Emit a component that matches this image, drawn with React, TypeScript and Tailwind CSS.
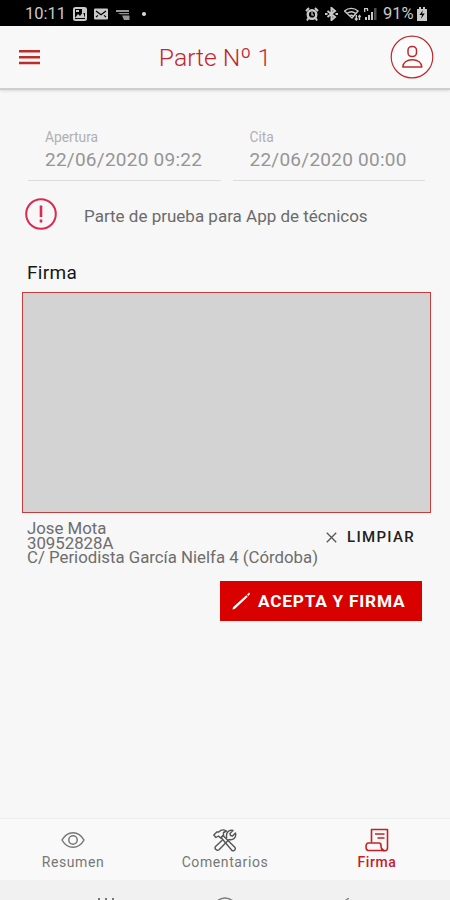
import { type ReactNode } from 'react'
import { clsx } from 'clsx'

interface DateFieldProps {
  label: string
  value: string
}

function DateField({ label, value }: DateFieldProps) {
  return (
    <div className="h-[58px] flex-1 border-b border-[#dcdcdc] pl-4 pt-[6px]">
      <p className="ml-[1px] text-[13.8px] leading-[17px] text-[#b0b0b0]">{label}</p>
      <p className="ml-[1px] mt-[3px] whitespace-nowrap text-[19px] leading-[22px] tracking-[0.25px] text-[#959595]">{value}</p>
    </div>
  )
}

function StatusBar() {
  return (
    <div className="flex h-[26px] shrink-0 items-center bg-black pl-[25px] pr-[22px] pt-[1px] text-[#c9c9c9]">
      <span className="w-[39px] whitespace-nowrap text-[16.5px] leading-5">10:11</span>

      {/* Notifications */}
      <svg className="ml-[9px] h-[14px] w-[14px]" viewBox="0 0 14 14">
        <rect x="1" y="1" width="12" height="12" rx="1.5" fill="none" stroke="currentColor" strokeWidth="2" />
        <path d="M2 11l3-4 2 2 3-4 2 6z" fill="currentColor" />
        <path d="M3 3h3v2H3zM9 2h3v4H9z" fill="currentColor" />
      </svg>
      <svg className="ml-[7px] h-[12px] w-[14px]" viewBox="0 0 14 12">
        <rect width="14" height="11" y=".5" rx="1" fill="currentColor" />
        <path d="M2 3l5 3.7L12 3M2 9l2-1.600M12 9l-2-1.600" fill="none" stroke="#000" strokeWidth="1.2" />
      </svg>
      <svg className="ml-[8px] mt-[2px] h-[12px] w-[14px]" viewBox="0 0 14 12" fill="currentColor">
        <path d="M0 1h13v2H0zM2 4h11v1.300H4zM6 6.500h7.500V11H8z" opacity=".75" />
      </svg>
      <span className="ml-[12px] h-1 w-1 rounded-full bg-[#dddddd]" />

      {/* System icons */}
      <div className="ml-auto flex items-center">
        <svg className="h-[14px] w-[14px]" viewBox="0 0 14 14" fill="none" stroke="currentColor">
          <circle cx="7" cy="7.500" r="4.300" strokeWidth="2.400" />
          <path d="M1 4L4 1M13 4L10 1M3.500 11l-1.500 2.500M10.500 11l1.500 2.500" strokeWidth="2" />
          <path d="M7 5v3h2" strokeWidth="1.2" />
        </svg>
        <svg className="ml-[6px] h-[14px] w-[13px]" viewBox="0 0 13 14" fill="none" stroke="currentColor" strokeWidth="2">
          <path d="M2.500 4l7.500 6-3.500 3V1L10 4l-7.500 6" />
          <path d="M0 7h2.500M10.500 7H13" />
        </svg>
        <svg className="ml-[6px] h-[14px] w-[17px]" viewBox="0 0 17 14" fill="none" stroke="currentColor" strokeWidth="1.4">
          <path d="M.5 4C4.500.5 10 .5 14 4L8 11zM3 6.500c3-2.200 6-2.200 8.500 0M5.500 9c1.200-1 2.500-1 3.700 0" />
          <path d="M12.300 8v5m-1.500-1.500l1.500 1.500 1.300-1.500M15.500 13V8.500m-1.200 1.500l1.200-1.500 1.200 1.500" />
        </svg>
        <svg className="ml-[3px] h-[14px] w-[13px]" viewBox="0 0 13 14" fill="currentColor">
          <path d="M0 1h1.300v4H0zM1 1h3v1.200H1zM3 2h1.200v2H3zM1 10h2v3H1zM4 8h2v5H4zM7 5h2v8H7z" />
          <path d="M10 1h2.500v12H10z" opacity=".4" />
        </svg>
        <span className="ml-[6px] w-[31px] whitespace-nowrap text-[16.5px] leading-5">91%</span>
        <svg className="ml-[3px] mr-[1px] h-[14px] w-[10px]" viewBox="0 0 10 14">
          <path d="M2 0h2v2h2V0h2v2h2v12H0V2h2z" fill="currentColor" />
          <path d="M6 3L2.500 8H5l-1 4 3.700-5.500H5z" fill="#000" />
        </svg>
      </div>
    </div>
  )
}

function Header() {
  return (
    <header className="flex h-[64px] shrink-0 items-center justify-between border-b-2 border-[#cecece] bg-[#f8f8f8] pl-[19px] pr-4 shadow-[0_1px_3px_rgba(0,0,0,0.12)]">
      <button aria-label="Menú">
        <svg className="h-[16px] w-[21px]" viewBox="0 0 21 16" fill="#bd2b2b">
          <path d="M0 1h21v2.400H0zM0 7h21v2.400H0zM0 12.800h21v2.400H0z" />
        </svg>
      </button>
      <h1 className="mt-[2px] whitespace-nowrap text-[24.7px] font-light leading-8 text-[#c1272d]">Parte Nº 1</h1>
      <svg className="h-11 w-11" viewBox="0 0 44 44" fill="none" stroke="#bd2b2b">
        <circle cx="22" cy="22" r="20.800" strokeWidth="1.200" fill="#fcfcfc" />
        <rect x="18" y="11.500" width="8.500" height="10" rx="3.800" strokeWidth="1.500" />
        <path d="M12.800 32c0-4.300 4-7.300 9.500-7.300s9.500 3 9.500 7.300z" strokeWidth="1.500" strokeLinejoin="round" />
      </svg>
    </header>
  )
}

interface TabProps {
  label: string
  active?: boolean
  children: ReactNode
}

function Tab({ label, active, children }: TabProps) {
  return (
    <button className={clsx('flex w-[152px] shrink-0 flex-col items-center', active ? 'text-[#c52026]' : 'text-[#777777]')}>
      <span className="flex h-6 items-center">{children}</span>
      <span className={clsx('mt-[1px] text-[14px] leading-[18px] tracking-[0.6px]', active && 'font-medium')}>{label}</span>
    </button>
  )
}

export default function App() {
  return (
    <div className="flex h-[900px] w-[450px] flex-col overflow-hidden bg-[#f7f7f7] font-[Roboto,sans-serif]">
      <StatusBar />
      <Header />

      <main className="flex-1 pl-[22px] pr-[19px]">
        <div className="mt-[33px] flex gap-3 pl-[6px] pr-[6px]">
          <DateField label="Apertura" value="22/06/2020 09:22" />
          <DateField label="Cita" value="22/06/2020 00:00" />
        </div>

        {/* Aviso */}
        <div className="mt-[17px] flex h-8 items-center pl-[3px]">
          <svg className="h-8 w-8" viewBox="0 0 32 32" fill="none" stroke="#d92b50">
            <circle cx="16" cy="16" r="14.800" strokeWidth="2" />
            <path d="M16 7.500V19M16 21.500v3" strokeWidth="2.600" />
          </svg>
          <p className="ml-[27px] mt-[3px] whitespace-nowrap text-[17px] leading-5 text-[#6b6b6b]">
            Parte de prueba para App de técnicos
          </p>
        </div>

        {/* Firma */}
        <h2 className="mt-[31px] pl-[5px] text-[19px] leading-6 tracking-[0.3px] text-[#161616]">Firma</h2>
        <div className="mt-[7px] h-[221px] border border-[#c63c3c] bg-[#d3d3d3]" />

        <div className="flex h-[68px] justify-between pl-[5px] pt-2">
          <div className="w-[292px] whitespace-nowrap text-[16.800px] leading-[14.600px] text-[#6d6d6d]">
            <p>Jose Mota</p>
            <p>30952828A</p>
            <p>C/ Periodista García Nielfa 4 (Córdoba)</p>
          </div>
          <button className="mr-4 mt-[6px] flex h-5 items-center text-[#222222]">
            <svg className="h-[11px] w-[11px]" viewBox="0 0 11 11" fill="none" stroke="#555555" strokeWidth="1.300">
              <path d="M.8.8l9.400 9.400M10.200.8L.8 10.200" />
            </svg>
            <span className="ml-[10px] text-[15px] font-medium leading-5 tracking-[1.300px]">LIMPIAR</span>
          </button>
        </div>

        <div className="flex justify-end pr-[9px]">
          <button className="flex h-10 w-[202px] items-center bg-[#d90000] pl-3 text-white">
            <svg className="h-5 w-[19px]" viewBox="0 0 19 20" fill="#ffffff">
              <path d="M.5 18.500l.5-2.200L14.300 4.300l1.400 1.500L2.700 18zM15 3.700L17 1.500l1.200 1.200-1.900 2.200z" />
            </svg>
            <span className="ml-[7px] whitespace-nowrap text-[17.300px] font-bold leading-5 tracking-[0.750px]">ACEPTA Y FIRMA</span>
          </button>
        </div>
      </main>

      <nav className="-mr-[3px] -ml-[3px] flex h-[62px] shrink-0 justify-center border-t border-[#eeeeee] bg-[#f9f9f9] pt-[9px]">
        <Tab label="Resumen">
          <svg className="h-[18px] w-6" viewBox="0 0 24 18" fill="none" stroke="currentColor" strokeWidth="1.500">
            <path d="M1 9C6.500-.7 17.500-.7 23 9 17.500 18.700 6.500 18.700 1 9z" />
            <circle cx="12" cy="9" r="4.200" />
          </svg>
        </Tab>
        <Tab label="Comentarios">
          <svg className="h-6 w-6" viewBox="0 0 24 24" fill="none" stroke="#555555" strokeWidth="1.400" strokeLinejoin="round">
            <path d="M.8 7l3-3h2C8 1.500 11 1.500 13.500 3l-3 1.500v3L7.500 10 5.500 8 3 9.500z" />
            <path d="M8 9.500l2-2 12 12c1 2-1 4-3 3z" />
            <path d="M13.800 10C12.500 5 15.500 1.500 20 2.500l-3 3 .5 2 2 .5 3-3c1 4.500-2 7.500-6.500 6.500L6 21.800c-2 1.500-5-1-3.500-3.300L9.500 12" />
          </svg>
        </Tab>
        <Tab label="Firma" active>
          <svg className="h-6 w-6" viewBox="0 0 24 24" fill="none" stroke="currentColor" strokeWidth="1.600" strokeLinejoin="round">
            <path d="M6.500 14.500v-13h16V20c0 3.600-5 3.600-5.500.5" />
            <path d="M3.500 15H14c2 0 2 1.500 2 2.500 0 2 .5 4.500 3 5H3.500C.2 22.500.2 15 3.500 15z" />
            <path d="M10 6h9.500M12.500 10h7" />
          </svg>
        </Tab>
      </nav>

      {/* Android navigation keys, cut off by the viewport */}
      <div className="flex h-5 shrink-0 items-end bg-[#f1f1f1] pl-[98px] text-[#777777]">
        <svg className="h-[3px] w-[17px]" viewBox="0 0 17 3" fill="currentColor">
          <path d="M0 1h2v2H0zM7 1h2v2H7zM14 1h2v2h-2z" />
        </svg>
        <svg className="ml-[101px] h-[3px] w-[18px]" viewBox="0 0 18 3" fill="none" stroke="currentColor" strokeWidth="1.500">
          <path d="M1 4Q9-2 17 4" />
        </svg>
        <svg className="ml-[111px] h-[2px] w-[4px]" viewBox="0 0 4 2" fill="currentColor">
          <path d="M3 0h1v1L2 2H0z" />
        </svg>
      </div>
    </div>
  )
}
